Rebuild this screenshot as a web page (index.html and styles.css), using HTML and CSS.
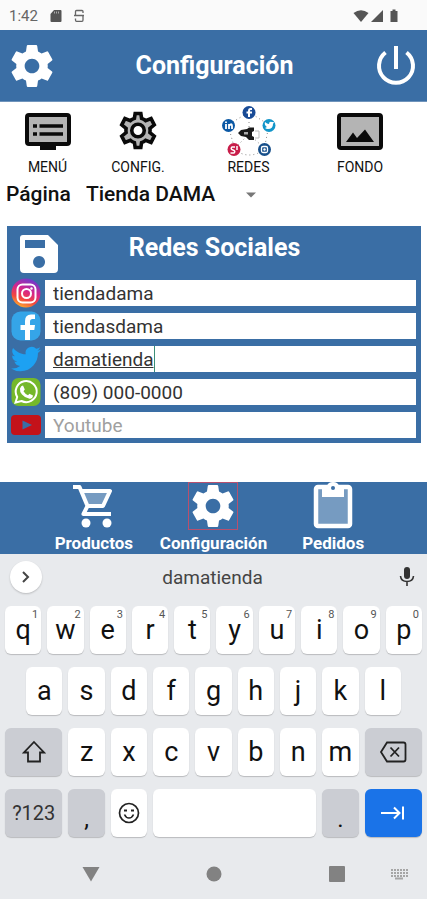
FILE: index.html
```html
<!DOCTYPE html>
<html lang="es">
<head>
<meta charset="utf-8">
<meta name="viewport" content="width=device-width, initial-scale=1">
<title>Configuración</title>
<link rel="stylesheet" href="styles.css">
</head>
<body>
<svg class="defs" aria-hidden="true">
  <defs>
    <symbol id="gear" viewBox="2 2 20 20"><path d="M19.430 12.980c.04-.32.07-.64.07-.98s-.03-.66-.07-.98l2.110-1.650c.19-.15.24-.42.12-.64l-2-3.460c-.12-.22-.39-.3-.61-.22l-2.490 1c-.52-.4-1.080-.73-1.690-.98l-.38-2.650C14.460 2.180 14.250 2 14 2h-4c-.25 0-.46.18-.49.42l-.38 2.650c-.61.25-1.170.59-1.690.98l-2.490-1c-.23-.09-.49 0-.61.22l-2 3.460c-.13.22-.07.49.12.64l2.110 1.650c-.04.32-.07.65-.07.98s.03.66.07.98l-2.110 1.650c-.19.15-.24.42-.12.64l2 3.460c.12.22.39.3.61.22l2.490-1c.52.4 1.080.73 1.690.98l.38 2.650c.03.24.24.42.49.42h4c.25 0 .46-.18.49-.42l.38-2.650c.61-.25 1.170-.59 1.690-.98l2.490 1c.23.09.49 0 .61-.22l2-3.460c.12-.22.07-.49-.12-.64l-2.110-1.650zM12 15.500c-1.930 0-3.500-1.570-3.500-3.500s1.570-3.500 3.500-3.500 3.500 1.570 3.500 3.500-1.570 3.500-3.500 3.500z"/></symbol>
  </defs>
</svg>

<div class="status">
  <span class="clock">1:42</span>
  <svg width="12" height="14" viewBox="0 0 12 14"><path fill="#555" d="M4 1h6.500a1 1 0 0 1 1 1v10a1 1 0 0 1-1 1h-9a1 1 0 0 1-1-1V5z"/><path stroke="#aaa" d="M4.500 2.500v2M6.500 2.500v2M8.500 2.500v2"/></svg>
  <svg class="sync" width="10" height="14" viewBox="0 0 10 14"><path fill="none" stroke="#666" stroke-width="1.300" d="M9 4V2.500Q9 1.500 8 1.500H2.500Q1.500 1.500 1.500 2.500V5.500Q1.500 6.500 2.500 6.500H8Q9 6.500 9 7.500V11Q9 12.300 8 12.300H2.500Q1.500 12.300 1.500 11V9.500M0 6.500H10"/></svg>
  <svg class="signals" width="48" height="14" viewBox="0 0 48 14"><g fill="#555"><path d="M.500 4Q8 -1.500 15.500 4L8 13z"/><path d="M18 13 30 1V13z"/><path d="M37.500 2H39.500V.500H42.500V2H44.500V13H37.500z"/></g></svg>
</div>

<header class="topbar">
  <button class="plain" aria-label="Ajustes"><svg class="big" fill="#fff"><use href="#gear"/></svg></button>
  <h1>Configuración</h1>
  <button class="plain" aria-label="Salir"><svg width="40" height="42" viewBox="0 0 40 42"><path fill="none" stroke="#fff" stroke-width="4" d="M9.500 7.500A17 17 0 1 0 30.500 7.500M20 1V24"/></svg></button>
</header>

<main>
  <nav class="tabs">
    <a href="#menu">
      <svg width="46" height="44" viewBox="0 0 46 44"><rect x="2" y="5" width="42" height="29" rx="2" fill="#b4b4b4" stroke="#0a0a0a" stroke-width="4"/><path fill="#0a0a0a" d="M15 35h16v5H15z"/><path stroke="#0a0a0a" stroke-width="3.500" d="M8 16h4M14.500 16H38M8 24h4M14.500 24H38"/></svg>
      <span>MENÚ</span></a>
    <a href="#config">
      <svg width="42" height="44" viewBox="0.900 1.200 22.200 23.200"><path fill="#b4b4b4" stroke="#0a0a0a" stroke-width="1.900" stroke-linejoin="miter" d="M18.300 13.100Q18.500 12 18.300 10.900L20.600 9 18.900 5.700 16 6.800Q15 6 13.900 5.600L13.500 3H10.500L10.100 5.600Q9 6 8 6.800L5.100 5.700 3.400 9 5.700 10.900Q5.500 12 5.700 13.100L3.400 15 5.100 18.300 8 17.200Q9 18 10.100 18.400L10.500 21H13.500L13.900 18.400Q15 18 16 17.200L18.900 18.300 20.600 15z"/><circle cx="12" cy="12" r="3.300" fill="#fff" stroke="#0a0a0a" stroke-width="1.900"/></svg>
      <span>CONFIG.</span></a>
    <a href="#redes">
      <svg width="56" height="52" viewBox="0 0 56 52">
        <g fill="none" stroke="#888" stroke-dasharray="1 3"><path d="M28 6 48 19 43 44Q28 54 14 44L7 19zM28 8V26M14 42 28 28 43 42"/></g>
        <circle cx="28" cy="6.500" r="6.500" fill="#184b96"/><path fill="none" stroke="#fff" stroke-width="2" d="M31 3H29.500Q28 3 28 5V11M25.500 6.500H31"/>
        <circle cx="7.500" cy="19.500" r="6.500" fill="#0a58a5"/><path fill="none" stroke="#fff" stroke-width="1.800" d="M5 18v5M5 15.500v1.500M8 23V18M8 20Q11 16.500 11 20V23"/>
        <circle cx="48" cy="19.500" r="6.500" fill="#1295c9"/><path fill="#fff" d="M44 16q2 2 4 2 0-3 3-2l2 0-1 2q0 5-5 5-2 0-3-1l2-1q-3-2-2-5z"/>
        <circle cx="13" cy="43.500" r="6.500" fill="#c81e4a"/><path fill="none" stroke="#fff" stroke-width="1.500" d="M14 41h-3q-2 2 1 3 3 1 1 3H9.500M16 40v4"/>
        <circle cx="43.500" cy="43.500" r="6.500" fill="#174f8a"/><rect x="40.500" y="40.500" width="6" height="6" rx="1.500" fill="none" stroke="#fff" stroke-width="1.300"/><circle cx="43.500" cy="43.500" r="1.200" fill="#fff"/>
        <path fill="#1a1a1a" d="M17 27 20 24 26 23 28 21.500H33V25L31 26V30L33 31V34H28L25 31 20 30z"/><path fill="#aaa" d="M23 26h4v2.500h-4z"/><path stroke="#bbb" fill="none" d="M34 25h4v7h-4"/>
      </svg>
      <span>REDES</span></a>
    <a href="#fondo">
      <svg width="46" height="44" viewBox="0 0 46 44"><rect x="2" y="5" width="42" height="33" rx="2" fill="#b4b4b4" stroke="#0a0a0a" stroke-width="4"/><path fill="#0a0a0a" d="M9 32 16 22.500 20 28 28 19.500 37 32z"/></svg>
      <span>FONDO</span></a>
  </nav>

  <div class="page-row">
    <label for="page">Página</label>
    <div class="picker">
      <select id="page"><option>Tienda DAMA</option></select>
      <svg width="10" height="6" viewBox="0 0 10 6"><path fill="#777" d="M0 .500h10L5 5.500z"/></svg>
    </div>
  </div>

  <form class="panel">
    <div class="panel-head">
      <button type="button" class="plain" aria-label="Guardar"><svg width="40" height="40" viewBox="0 0 40 40"><path fill="#fff" fill-rule="evenodd" d="M4 1H29L39 11V35a4 4 0 0 1-4 4H5a4 4 0 0 1-4-4V4a3 3 0 0 1 3-3zM6 6V14H26V6zM20 22a6 6 0 1 0 .1 0z"/></svg></button>
      <h2>Redes Sociales</h2>
    </div>
    <div class="field">
      <label for="ig"><svg width="30" height="30" viewBox="0 0 30 30" role="img" aria-label="Instagram"><defs><linearGradient id="igbg" x1=".250" y1="1" x2=".650" y2="0"><stop offset="0" stop-color="#fdb62c"/><stop offset=".300" stop-color="#f4483d"/><stop offset=".600" stop-color="#d5258c"/><stop offset="1" stop-color="#6a3bd0"/></linearGradient></defs><circle cx="15" cy="15" r="14.500" fill="url(#igbg)"/><rect x="6.500" y="6.500" width="18" height="18" rx="5" fill="none" stroke="#fff" stroke-width="2"/><circle cx="15.500" cy="15.500" r="4.500" fill="none" stroke="#fff" stroke-width="2"/><circle cx="20.500" cy="10.500" r="1.200" fill="#fff"/></svg></label>
      <div class="box"><input id="ig" type="text" value="tiendadama"></div>
    </div>
    <div class="field">
      <label for="fb"><svg width="30" height="30" viewBox="0 0 30 30" role="img" aria-label="Facebook"><rect x=".500" y=".500" width="29" height="29" rx="9" fill="#35a5e8"/><path fill="#fff" d="M14 29V19H9.500V14H14V10Q14 3.500 20 3.500H24V8H21.500Q19 8 19 10.500V14H24L23.300 19H19V29z"/></svg></label>
      <div class="box"><input id="fb" type="text" value="tiendasdama"></div>
    </div>
    <div class="field">
      <label for="tw"><svg width="30" height="30" viewBox="0 1 24 22" role="img" aria-label="Twitter"><path fill="#1da1f2" d="M23.950 4.570a10 10 0 0 1-2.820.770 4.960 4.960 0 0 0 2.160-2.720c-.950.550-2 .950-3.130 1.180a4.920 4.920 0 0 0-8.380 4.480C7.690 8.090 4.070 6.130 1.640 3.160a4.820 4.820 0 0 0-.670 2.480c0 1.710.870 3.210 2.190 4.100a4.900 4.900 0 0 1-2.230-.620v.060a4.920 4.920 0 0 0 3.950 4.830 4.960 4.960 0 0 1-2.210.080 4.940 4.940 0 0 0 4.600 3.420A9.870 9.870 0 0 1 0 19.540a13.990 13.990 0 0 0 7.550 2.210c9.050 0 14-7.500 14-13.980 0-.210 0-.420-.020-.630a9.940 9.940 0 0 0 2.460-2.550z"/></svg></label>
      <div class="box"><input id="tw" class="typing" type="text" value="damatienda"></div>
    </div>
    <div class="field">
      <label for="wa"><svg width="30" height="30" viewBox="0 0 30 30" role="img" aria-label="WhatsApp"><rect x=".500" y="1" width="29" height="28" rx="7" fill="#75b82a"/><path fill="none" stroke="#fff" stroke-width="2" d="M4.500 25.500 6.200 20A10.500 10.500 0 1 1 10.500 24z"/><path fill="#fff" d="M12 8.500 13.800 12.500 12.500 14.300Q14 17 17 18.200L18.500 16.700 22 18.500Q21.500 22 18.500 21.800 14 21 11 17.500 8.500 14.500 9 11.500 10 8.500 12 8.500z"/></svg></label>
      <div class="box"><input id="wa" type="text" value="(809) 000-0000"></div>
    </div>
    <div class="field">
      <label for="yt"><svg width="30" height="30" viewBox="0 0 30 30" role="img" aria-label="YouTube"><rect y="5" width="30" height="20" rx="4" fill="#c4121a"/><path fill="#3a6ea5" d="M11.500 10.500 21 15l-9.500 4.500z"/></svg></label>
      <div class="box"><input id="yt" type="text" placeholder="Youtube"></div>
    </div>
  </form>
</main>

<nav class="bottom">
  <a href="#productos"><svg width="48" height="48" viewBox="0 0 48 48"><path fill="#769bc1" d="M13 10H38L32 24H18z"/><path fill="none" stroke="#fff" stroke-width="4" stroke-linejoin="round" d="M3 5H9.500L17.500 24H33L40 9H12M17.500 24 13.500 32H41"/><circle cx="16" cy="41" r="4.500" fill="#fff"/><circle cx="37" cy="41" r="4.500" fill="#fff"/></svg><span>Productos</span></a>
  <a href="#configuracion"><span class="selected"><svg class="big" fill="#fff"><use href="#gear"/></svg></span><span>Configuración</span></a>
  <a href="#pedidos"><svg width="48" height="48" viewBox="0 0 48 48"><rect x="7" y="5" width="34" height="39" rx="2" fill="#769bc1" stroke="#fff" stroke-width="4.500"/><path fill="#fff" d="M13 4H18Q19 0 24 0T30 4H35V15H13z"/><circle cx="24" cy="6" r="2" fill="#3a6ea5"/></svg><span>Pedidos</span></a>
</nav>

<section class="keyboard" aria-label="Teclado">
  <div class="suggest">
    <button class="expand" aria-label="Expandir"><svg width="10" height="14" viewBox="0 0 10 14"><path fill="none" stroke="#444" stroke-width="2" d="M2 2 7 7 2 12"/></svg></button>
    <button class="word">damatienda</button>
    <button class="plain mic" aria-label="Dictar"><svg width="16" height="20" viewBox="0 0 16 20"><rect x="5" y="0" width="6" height="12" rx="3" fill="#333"/><path fill="none" stroke="#333" stroke-width="1.600" d="M1.500 9Q2 14.500 8 14.500T14.500 9M8 14.500V19"/></svg></button>
  </div>
  <div class="keys">
    <button>q<sup>1</sup></button><button>w<sup>2</sup></button><button>e<sup>3</sup></button><button>r<sup>4</sup></button><button>t<sup>5</sup></button><button>y<sup>6</sup></button><button>u<sup>7</sup></button><button>i<sup>8</sup></button><button>o<sup>9</sup></button><button>p<sup>0</sup></button>
    <button class="inset">a</button><button>s</button><button>d</button><button>f</button><button>g</button><button>h</button><button>j</button><button>k</button><button>l</button>
    <button class="wide gray first" aria-label="Mayúsculas"><svg width="24" height="24" viewBox="0 0 24 24"><path fill="none" stroke="#222" stroke-width="1.800" d="M12 2 22 12.500H18V21.500H6V12.500H2z"/></svg></button><button>z</button><button>x</button><button>c</button><button>v</button><button>b</button><button>n</button><button>m</button><button class="wide gray" aria-label="Borrar"><svg width="28" height="22" viewBox="0 0 28 22"><path fill="none" stroke="#222" stroke-width="1.800" d="M8 1.500H24.500Q26.500 1.500 26.500 3.500V18.500Q26.500 20.500 24.500 20.500H8L2 11zM11.500 6.500 20 15.500M20 6.500 11.500 15.500"/></svg></button>
    <button class="wide gray symbols">?123</button><button class="gray punct">,</button><button aria-label="Emoji"><svg width="22" height="22" viewBox="0 0 22 22"><circle cx="11" cy="11" r="9.500" fill="none" stroke="#222" stroke-width="1.700"/><path fill="none" stroke="#222" stroke-width="1.600" d="M6.500 12.500Q8 16 11 16T15.500 12.500"/><path stroke="#222" stroke-width="2" d="M6 8.500H9M13 8.500H16"/></svg></button><button class="space" aria-label="Espacio"></button><button class="gray punct">.</button><button class="wide next" aria-label="Siguiente"><svg width="24" height="14" viewBox="0 0 24 14"><path fill="none" stroke="#fff" stroke-width="2" d="M0 7H18M13 1.500 18.500 7 13 12.500M22 .500V13.500"/></svg></button>
  </div>
  <div class="system">
    <button class="back" aria-label="Atrás"><svg width="18" height="16" viewBox="0 0 18 16"><path fill="#828282" d="M.500 1H17.500L9 15.500z"/></svg></button>
    <button class="home" aria-label="Inicio"><svg width="16" height="16" viewBox="0 0 16 16"><circle cx="8" cy="8" r="7.500" fill="#828282"/></svg></button>
    <button class="recent" aria-label="Recientes"><svg width="16" height="16" viewBox="0 0 16 16"><rect width="16" height="16" rx="1" fill="#828282"/></svg></button>
    <button class="switch" aria-label="Cambiar teclado"><svg width="18" height="12" viewBox="0 0 18 12"><path fill="none" stroke="#a5a5a5" stroke-width="2" stroke-dasharray="2 1" d="M1 2H18M1 5H18M1 8H18"/><path stroke="#a5a5a5" stroke-width="2" d="M5 10.500H13"/></svg></button>
  </div>
</section>
</body>
</html>
```
FILE: styles.css
```css
* {
  box-sizing: border-box;
}

body {
  --blue: #3a6ea5;
  margin: 0;
  background: #fff;
  color: #111;
  font-family: Roboto, sans-serif;
}

svg {
  display: block;
  flex: none;
}

button,
input,
select {
  margin: 0;
  padding: 0;
  border: 0;
  background: none;
  color: inherit;
  font: inherit;
}

a {
  color: inherit;
  text-decoration: none;
}

h1,
h2 {
  margin: 0;
  color: #fff;
  font-size: 25px;
  font-weight: 700;
  line-height: 32px;
  text-align: center;
}

.defs {
  position: absolute;
  width: 0;
  height: 0;
}

.big {
  width: 42px;
  height: 42px;
}

.status {
  display: flex;
  align-items: center;
  gap: 12px;
  height: 30px;
  padding: 2px 26px 0 9px;
  background: #fafafa;
}

.clock {
  color: #666;
  font-size: 15px;
}

.signals {
  margin-left: auto;
}

.topbar {
  display: grid;
  grid-template-columns: 42px 1fr 42px;
  align-items: center;
  height: 72px;
  padding: 0 9px 0 11px;
  border-bottom: 1px solid #6f94bb;
  background: var(--blue);
}

.tabs {
  display: grid;
  grid-template-columns: 95fr 86fr 135fr 88fr 23fr;
  height: 74px;
  padding-top: 5px;
}

.tabs a {
  display: grid;
  grid-template-rows: 50px 20px;
  place-items: center;
  font-size: 14px;
  line-height: 20px;
}

.page-row {
  display: flex;
  align-items: center;
  gap: 15px;
  height: 36px;
  padding: 0 6px;
  font-size: 21px;
  font-weight: 500;
}

.picker {
  position: relative;
}

.picker select {
  appearance: none;
  padding-right: 40px;
}

.picker svg {
  position: absolute;
  top: 10px;
  right: 0;
  pointer-events: none;
}

.panel {
  display: grid;
  gap: 3px;
  margin: 14px 6px 39px 7px;
  padding: 0 5px 3px 4px;
  background: var(--blue);
}

.panel-head {
  display: grid;
  grid-template-columns: 54px 1fr 54px;
  height: 49px;
  padding: 6px 6px 0 8px;
}

.panel-head button {
  justify-self: start;
}

.field {
  display: grid;
  grid-template-columns: 30px 1fr;
  align-items: center;
  gap: 4px;
  height: 30px;
}

.box {
  display: flex;
  height: 26px;
  padding-left: 8px;
  background: #fff;
}

.box input {
  flex: 1;
  min-width: 0;
  outline: 0;
  font-size: 19px;
  color: #333;
}

.box input::placeholder {
  color: #a0a0a0;
}

.box .typing {
  flex: none;
  field-sizing: content;
  border-right: 1px solid #3c8f78;
  text-decoration: underline;
  text-decoration-thickness: 1px;
}

.bottom {
  display: grid;
  grid-template-columns: repeat(3, 1fr);
  height: 72px;
  padding: 0 34px;
  background: var(--blue);
  color: #fff;
  font-size: 17px;
  font-weight: 700;
  line-height: 22px;
}

.bottom a {
  display: grid;
  grid-template-rows: 50px 22px;
  place-items: start center;
}

.selected {
  display: grid;
  place-items: center;
  width: 50px;
  height: 48px;
  border: 1px solid #b8506e;
}

.keyboard {
  background: #e8eaed;
}

.suggest {
  display: grid;
  grid-template-columns: 32px 1fr 32px;
  align-items: center;
  height: 52px;
  padding: 0 12px 6px 10px;
}

.expand {
  display: grid;
  place-items: center;
  width: 32px;
  height: 32px;
  border-radius: 50%;
  background: #fff;
  box-shadow: 0 1px 2px #0003;
}

.word {
  color: #444;
  font-size: 19px;
}

.mic {
  justify-self: end;
}

.keys {
  display: grid;
  grid-template-columns: repeat(20, 1fr);
  grid-auto-rows: 48px;
  gap: 13px 6px;
  padding: 0 5px;
}

.keys button {
  display: grid;
  position: relative;
  grid-column: span 2;
  place-items: center;
  border-radius: 6px;
  background: #fff;
  box-shadow: 0 1px 1px #0003;
  font-size: 27px;
  line-height: 32px;
}

.keys .inset {
  grid-column: 2 / span 2;
}

.keys .wide {
  grid-column: span 3;
}

.keys .first {
  grid-column: 1 / span 3;
}

.keys .space {
  grid-column: span 8;
}

.keys .gray {
  background: #cbcdd3;
}

.keys .symbols {
  color: #333;
  font-size: 20px;
}

.keys .punct {
  align-items: end;
  padding-bottom: 2px;
  font-size: 24px;
}

.keys .next {
  background: #1a73e8;
}

.keys sup {
  position: absolute;
  top: 3px;
  right: 3px;
  color: #555;
  font-size: 11px;
  line-height: 12px;
}

.system {
  display: grid;
  grid-template-columns: 29fr 123fr 123fr 25fr 74fr 50fr 3fr;
  align-items: center;
  justify-items: center;
  height: 62px;
  padding-top: 12px;
}

.back {
  grid-column: 2;
}

.home {
  grid-column: 3;
}

.recent {
  grid-column: 5;
}

.switch {
  grid-column: 6;
}
```
